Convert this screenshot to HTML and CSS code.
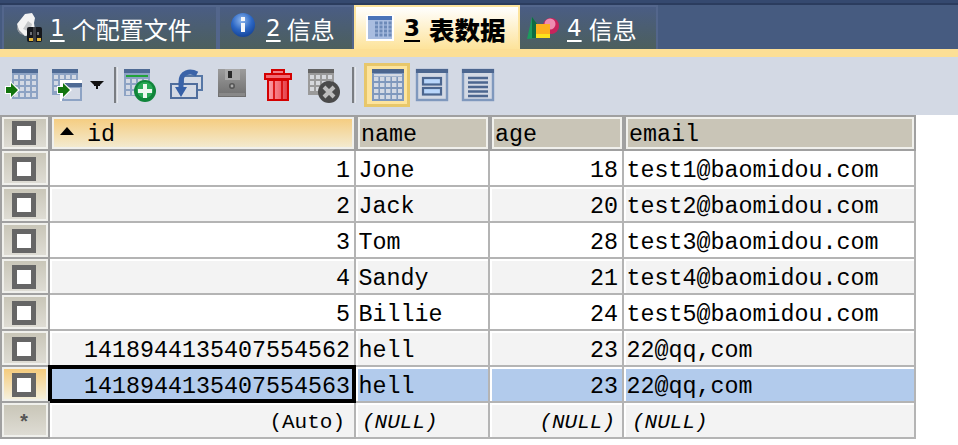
FILE: index.html
```html
<!DOCTYPE html>
<html lang="zh">
<head>
<meta charset="utf-8">
<title>表数据</title>
<link rel="stylesheet" href="styles.css">
</head>
<body>
<nav class="tabbar">
  <div class="tab tab-one">
    <svg class="tab-icon" width="28" height="32" viewBox="0 0 28 32"><path d="M1 12 9 2l7-1 3 5-1 5 1 7-4 5-6 1-7-5z" fill="#f2f2f2"/><path d="M7 17l5-8 4 3-2 8z" fill="#c4c6c8"/><path d="M1 12l2 6 5 5-4-1-3-5z" fill="#8d929a"/><rect x="11" y="15" width="15" height="15" rx="2" fill="#15171c"/><rect x="17" y="15" width="3" height="15" fill="#3b3d42"/><path d="M13 26h4v3h-4zM21 26h4v3h-4z" fill="#e2b53a"/><path d="M14 20h2v3h-2zM21 20h2v3h-2z" fill="#6d7077"/></svg>
    <span class="digit">1</span><span class="tab-label">个配置文件</span>
  </div>
  <div class="tab tab-two">
    <svg class="tab-icon" width="26" height="26" viewBox="0 0 26 26"><defs><radialGradient id="info" cx=".45" cy=".3" r=".75"><stop offset="0" stop-color="#8fb8ee"/><stop offset=".55" stop-color="#2c67c4"/><stop offset="1" stop-color="#123f92"/></radialGradient></defs><circle cx="13" cy="13" r="12" fill="url(#info)"/><rect x="11" y="5" width="4" height="4" fill="#f4f6fa"/><rect x="11" y="11" width="4" height="9" fill="#f4f6fa"/></svg>
    <span class="digit">2</span><span class="tab-label">信息</span>
  </div>
  <div class="tab tab-active">
    <svg class="tab-icon" width="28" height="26" viewBox="0 0 28 26"><rect width="28" height="26" fill="#fff"/><rect x="2" y="1" width="24" height="23" fill="#a9bde0"/><rect x="2" y="1" width="24" height="4" fill="#4a73b8"/><path d="M9 8h17M9 12h17M9 16h17M9 20h17" stroke="#6d8ab8" stroke-width="3" stroke-dasharray="3 1.5" fill="none"/></svg>
    <span class="digit">3</span><span class="tab-label">表数据</span>
  </div>
  <div class="tab tab-four">
    <svg class="tab-icon" width="34" height="24" viewBox="0 0 34 24"><path d="M6 1l5 7v14l-10 1z" fill="#1c9a5e"/><path d="M6 1l5 7v14H6z" fill="#0e6b42"/><circle cx="25" cy="10" r="8" fill="#c8235c"/><circle cx="24" cy="8" r="5.5" fill="#ee8cb0"/><rect x="10" y="8" width="14" height="14" fill="#fcb01e"/><rect x="10" y="18" width="14" height="4" fill="#fbe21c"/></svg>
    <span class="digit">4</span><span class="tab-label">信息</span>
  </div>
</nav>
<div class="strip"></div>
<div class="toolbar">
  <svg class="tool" width="44" height="44" viewBox="0 0 44 44"><rect x="8" y="6" width="26" height="30" fill="#8da3c4"/><rect x="8" y="6" width="26" height="4" fill="#4e6a94"/><path d="M10 14h23M10 20h23M10 26h23M10 32h23" stroke="#d3d9e4" stroke-width="4" stroke-dasharray="4 2" fill="none"/><path d="M1 23h5v-5l10 9-10 9v-5H1z" fill="#fff"/><path d="M2 24h5v-4l7 7-7 7v-4H2z" fill="#13740f"/></svg>
  <svg class="tool" width="60" height="44" viewBox="0 0 60 44"><rect x="4" y="6" width="26" height="26" fill="#8da3c4"/><rect x="4" y="6" width="26" height="4" fill="#4e6a94"/><path d="M6 14h23M6 20h23M6 26h23" stroke="#d3d9e4" stroke-width="4" stroke-dasharray="4 2" fill="none"/><rect x="12" y="17" width="22" height="21" fill="#fff"/><rect x="14" y="20" width="20" height="18" fill="#8da3c4"/><rect x="14" y="20" width="20" height="4" fill="#4e6a94"/><rect x="16" y="25" width="16" height="11" fill="#d3d9e4"/><path d="M9 23h5v-5l10 9-10 9v-5H9z" fill="#fff"/><path d="M10 24h5v-4l7 7-7 7v-4h-5z" fill="#13740f"/><path d="M42 18h14l-4 4v1h-2v3h-2v-3h-2v-1z" fill="#111"/></svg>
  <svg class="tool" width="14" height="44" viewBox="0 0 14 44"><rect x="6" y="4" width="2.4" height="36" fill="#7a7d82"/><rect x="8.4" y="4" width="1.6" height="36" fill="#e6e9ef"/></svg>
  <svg class="tool" width="44" height="44" viewBox="0 0 44 44"><rect x="2" y="6" width="26" height="27" fill="#8da3c4"/><rect x="2" y="6" width="26" height="4" fill="#4e6a94"/><rect x="4" y="12" width="22" height="2" fill="#22a33a"/><path d="M4 18h23M4 24h23M4 30h23" stroke="#d3d9e4" stroke-width="4" stroke-dasharray="4 2" fill="none"/><circle cx="23" cy="28" r="11" fill="#10843a"/><circle cx="23" cy="27" r="8" fill="#2aa957"/><path d="M16 28h14M23 21v14" stroke="#eef7f0" stroke-width="4" fill="none"/></svg>
  <svg class="tool" width="46" height="44" viewBox="0 0 46 44"><path d="M17 13h19v14H17z" fill="#d3d9e4" stroke="#5677a6" stroke-width="2"/><path d="M5 21h26v14H5z" fill="#d3d9e4" stroke="#4f6d9c" stroke-width="2"/><path d="M31 11C24 7 15 9 15 19v6" fill="none" stroke="#3a63a8" stroke-width="5"/><path d="M9 24h12l-6 10z" fill="#3560a8"/></svg>
  <svg class="tool" width="46" height="44" viewBox="0 0 46 44"><defs><linearGradient id="disk" x1="0" y1="0" x2="0" y2="1"><stop offset="0" stop-color="#9c9c9c"/><stop offset="1" stop-color="#6e6e6e"/></linearGradient></defs><path d="M6 6h28v28H6z" fill="url(#disk)"/><rect x="13" y="6" width="15" height="11" fill="#a9a9a9"/><rect x="16" y="8" width="4" height="7" fill="#2a2a2a"/><circle cx="20" cy="23" r="3" fill="#555"/><circle cx="20" cy="23" r="1.4" fill="#aaa"/><rect x="7" y="30" width="26" height="3" fill="#888"/></svg>
  <svg class="tool" width="44" height="44" viewBox="0 0 44 44"><defs><linearGradient id="bin" x1="0" y1="0" x2="1" y2="0"><stop offset="0" stop-color="#f9a0a8"/><stop offset=".5" stop-color="#f5737c"/><stop offset="1" stop-color="#e23c44"/></linearGradient></defs><path d="M14 11V7h12v4" fill="#f08088" stroke="#d40000" stroke-width="2"/><rect x="7" y="11" width="26" height="5" fill="#f26a72" stroke="#d40000" stroke-width="2"/><path d="M10 17h20v20H10z" fill="url(#bin)" stroke="#d40000" stroke-width="2"/><path d="M16 18v18M24 18v18" stroke="#d40000" stroke-width="1.6"/></svg>
  <svg class="tool" width="44" height="44" viewBox="0 0 44 44"><rect x="6" y="6" width="26" height="26" fill="#9a9a9a"/><rect x="6" y="6" width="26" height="4" fill="#636363"/><path d="M8 14h23M8 20h23M8 26h23" stroke="#d6d8dc" stroke-width="4" stroke-dasharray="4 2" fill="none"/><circle cx="27" cy="29" r="11" fill="#4a4a4a"/><path d="M22 24l10 10M32 24 22 34" stroke="#bdbdbd" stroke-width="4" fill="none"/></svg>
  <svg class="tool" width="14" height="44" viewBox="0 0 14 44"><rect x="6" y="4" width="2.4" height="36" fill="#7a7d82"/><rect x="8.4" y="4" width="1.6" height="36" fill="#e6e9ef"/></svg>
  <div class="view-active">
    <svg class="tool" width="40" height="38" viewBox="0 0 40 38"><rect x="5" y="3" width="32" height="32" fill="#7f98bd"/><rect x="5" y="3" width="32" height="4" fill="#4c668f"/><rect x="7" y="8" width="28" height="2.4" fill="#d3d9e4"/><path d="M7 13h28M7 19h28M7 25h28M7 31h28" stroke="#d3d9e4" stroke-width="4" stroke-dasharray="4.4 1.6" fill="none"/></svg>
  </div>
  <svg class="tool" width="46" height="44" viewBox="0 0 46 44"><rect x="7" y="7" width="30" height="30" fill="#d3d9e4" stroke="#7f98bd" stroke-width="2.4"/><rect x="6" y="6" width="32" height="4" fill="#4c668f"/><rect x="13" y="15" width="18" height="6.5" fill="#b9d6fb" stroke="#4c668f" stroke-width="2.2"/><rect x="13" y="25" width="18" height="6.5" fill="#b9d6fb" stroke="#4c668f" stroke-width="2.2"/></svg>
  <svg class="tool" width="46" height="44" viewBox="0 0 46 44"><rect x="7" y="7" width="30" height="30" fill="#d3d9e4" stroke="#7f98bd" stroke-width="2.4"/><rect x="6" y="6" width="32" height="4" fill="#4c668f"/><path d="M12 15h20M12 19.500h20M12 24h20M12 28.500h20M12 33h20" stroke="#4c668f" stroke-width="2.400" fill="none"/></svg>
</div>

<div class="grid grid-head">
  <div class="row-head"><span class="check"></span></div>
  <div class="col-head col-sorted"><svg class="sort" width="14" height="8" viewBox="0 0 14 8"><path d="M7 0l7 8H0z" fill="#000"/></svg>id</div>
  <div class="col-head">name</div>
  <div class="col-head">age</div>
  <div class="col-head">email</div>
</div>
<div class="grid grid-body">
  <div class="row-head"><span class="check"></span></div>
  <div class="cell num">1</div><div class="cell">Jone</div><div class="cell num">18</div><div class="cell">test1@baomidou.com</div>

  <div class="row-head"><span class="check"></span></div>
  <div class="cell alt num">2</div><div class="cell alt">Jack</div><div class="cell alt num">20</div><div class="cell alt">test2@baomidou.com</div>

  <div class="row-head"><span class="check"></span></div>
  <div class="cell num">3</div><div class="cell">Tom</div><div class="cell num">28</div><div class="cell">test3@baomidou.com</div>

  <div class="row-head"><span class="check"></span></div>
  <div class="cell alt num">4</div><div class="cell alt">Sandy</div><div class="cell alt num">21</div><div class="cell alt">test4@baomidou.com</div>

  <div class="row-head"><span class="check"></span></div>
  <div class="cell num">5</div><div class="cell">Billie</div><div class="cell num">24</div><div class="cell">test5@baomidou.com</div>

  <div class="row-head"><span class="check"></span></div>
  <div class="cell alt num">1418944135407554562</div><div class="cell alt">hell</div><div class="cell alt num">23</div><div class="cell alt">22@qq,com</div>

  <div class="row-head row-head-current"><span class="check"></span></div>
  <div class="cell current num">1418944135407554563</div><div class="cell selected">hell</div><div class="cell selected num">23</div><div class="cell selected">22@qq,com</div>

  <div class="row-head"><span class="star">*</span></div>
  <div class="cell alt num auto">(Auto)</div><div class="cell alt null-name">(NULL)</div><div class="cell alt num null-age">(NULL)</div><div class="cell alt null-email">(NULL)</div>
</div>
</body>
</html>
```

FILE: styles.css
```css
* { box-sizing: border-box; }

html, body {
  margin: 0;
  padding: 0;
  background: #fff;
}

body {
  font-family: "Liberation Mono", monospace;
  font-size: 23.33px;
  color: #000;
}

svg { display: block; flex: none; }

/* tabs */
.tabbar {
  display: flex;
  height: 49px;
  padding: 2px 0 0 2px;
  background: #465b80;
  border-top: 3px solid #35496f;
  box-shadow: inset 0 2px 0 #2b3c5e;
}

.tab {
  display: flex;
  align-items: center;
  height: 44px;
  border: 2px solid #53668c;
  border-bottom: 0;
  background: linear-gradient(#4a5d84, #4c5f5d);
  color: #fff;
  font-family: "DejaVu Sans", sans-serif;
  font-size: 23px;
}

.tab-one { width: 216px; padding-left: 12px; }
.tab-two { width: 136px; padding-left: 10px; }
.tab-active { width: 166px; padding-left: 10px; }
.tab-four { width: 138px; padding-left: 6px; border-left: 0; }

.tab-active {
  border-color: #fde49d;
  background: linear-gradient(#fff, #fde39a);
  color: #000;
  font-weight: bold;
}

.tab-icon { margin-right: 10px; }
.tab-one .tab-icon { margin-right: 6px; }
.tab-two .tab-icon { margin: -6px 10px 0 0; }
.tab-four .tab-icon { margin-right: 7px; }

.digit { text-decoration: underline; text-underline-offset: 4px; }

.tab-label {
  margin-left: 7px;
  font-family: "Noto Sans CJK SC", sans-serif;
  font-size: 24px;
}

.tab-two .tab-label { margin-left: 6px; }

.tab-active .tab-label {
  margin-left: 9px;
  font-size: 25.5px;
  font-weight: 900;
}

.strip { height: 8px; background: #fcdf96; }

/* toolbar */
.toolbar {
  display: flex;
  align-items: flex-start;
  height: 58px;
  padding: 6px 0 0 4px;
  background: #d3d9e4;
}

.view-active {
  width: 46px;
  height: 44px;
  margin-left: 4px;
  border: 3px solid #e8c76a;
  background: #fde49d;
}

/* grid */
.grid {
  display: grid;
  grid-template-columns: 46px 304px 132px 132px 290px;
  gap: 2px;
  width: 916px;
  padding: 0 2px 2px;
}

.grid-head {
  grid-auto-rows: 32px;
  padding-top: 2px;
  background: #a0a0a0;
}

.grid-body {
  grid-auto-rows: 34px;
  background: #b4b4b4;
}

.row-head {
  display: flex;
  align-items: center;
  justify-content: center;
  padding: 1px 2px 0 0;
  border: 2px solid #f0f0ec;
  background: linear-gradient(#c9c6b8, #dedcd4);
  box-shadow: 0 0 0 2px #a0a0a0;
}

.grid-head .row-head { box-shadow: none; padding-top: 0; }

.row-head-current { background: linear-gradient(#f5cb7c, #f5f0dc); }

.check {
  width: 24px;
  height: 24px;
  border: 5px solid #666;
  background: #fff;
}

.star {
  padding-top: 6px;
  color: #555;
  font-size: 20px;
  font-weight: bold;
  line-height: 1;
}

.col-head {
  display: flex;
  align-items: center;
  padding: 4px 0 0 3px;
  border-left: 2px solid #a0a0a0;
  background: #c9c5b7;
  box-shadow: inset 0 0 0 2px #f0f0ec;
}

.col-sorted {
  padding-left: 8px;
  background: linear-gradient(#f5cb7c, #f3ecd4);
}

.sort { margin: -8px 13px 0 0; }

.cell {
  padding: 5px 3px 0 2.5px;
  background: #fff;
  line-height: 30px;
  white-space: pre;
}

.num { padding-right: 4px; text-align: right; }

.alt {
  background: #f3f3f3;
  box-shadow: inset 2px 2px 0 #fff;
}

.selected {
  background: #b2cbec;
  box-shadow: inset 2px 2px 0 #fff;
}

.current {
  background: #b2cbec;
  box-shadow: 0 0 0 2px #000, inset 0 0 0 2px #000;
}

.auto,
.null-name,
.null-age,
.null-email {
  font-size: 21px;
}

.null-name,
.null-age,
.null-email {
  font-style: italic;
}

.auto { padding-right: 9px; }
.null-name { padding-left: 6px; }
.null-age { padding-right: 7px; }
.null-email { padding-left: 8px; }
```
